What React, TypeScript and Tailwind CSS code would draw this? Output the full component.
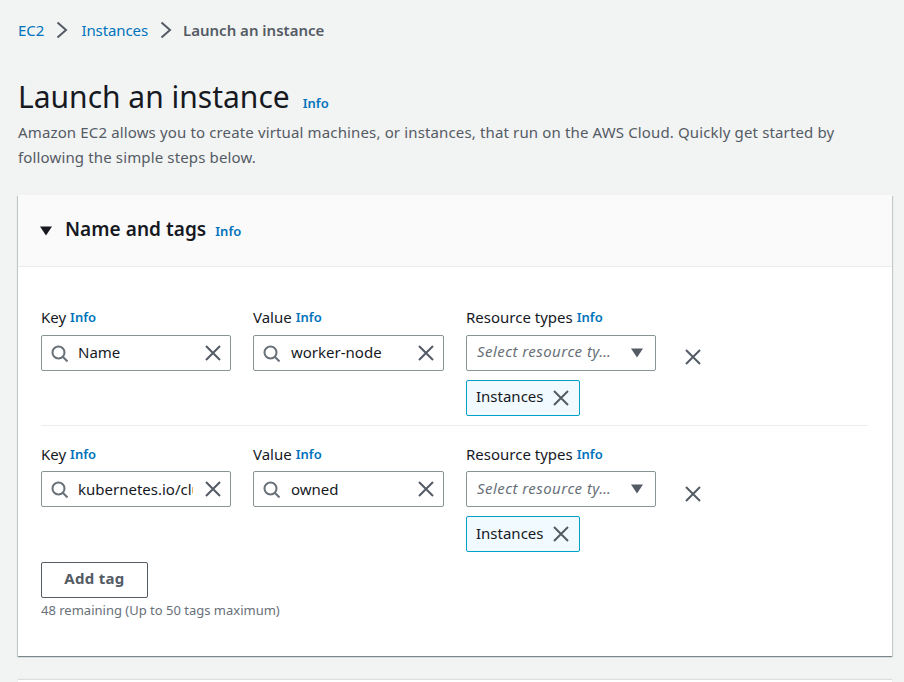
import React from "react";

const Chevron = ({ className = "mr-[9px]" }: { className?: string }) => (
  <svg width="16" height="18" viewBox="0 0 16 18" fill="none" stroke="#545b64" strokeWidth="2" className={`ml-[10px] shrink-0 ${className}`}>
    <path d="M3.5 1.5l8.5 7.5-8.5 7.5" />
  </svg>
);

const Close = ({ size = 16 }: { size?: number }) => (
  <svg width={size} height={size} viewBox="0 0 16 16" fill="none" stroke="#545b64" strokeWidth="2" className="shrink-0">
    <path d="M1 1l14 14M15 1L1 15" />
  </svg>
);

const Search = () => (
  <svg width="17" height="17" viewBox="0 0 17 17" fill="none" stroke="#687078" strokeWidth="2" className="shrink-0">
    <circle cx="7.5" cy="7.5" r="6" />
    <path d="M12 12l4.5 4.5" />
  </svg>
);

const Info = ({ className = "" }: { className?: string }) => (
  <span className={`text-[13px] font-semibold text-[#0073bb] ${className}`}>Info</span>
);

const Label = ({ children, last }: { children: React.ReactNode; last?: boolean }) => (
  <div className={`flex h-[22px] items-center text-[15px] leading-[22px] text-[#16191f] ${last ? "mb-[6px]" : "mb-[7px]"}`}>
    {children}
    <Info className="ml-[4px]" />
  </div>
);

const SearchInput = ({ value, wide, last }: { value: string; wide?: boolean; last?: boolean }) => (
  <div className="flex h-[36px] items-center rounded-[2px] border border-[#879596] bg-white pl-[9px]">
    <Search />
    <span className={`w-[115px] shrink-0 overflow-hidden whitespace-nowrap text-[15px] text-[#16191f] ${wide ? "ml-[11px]" : "ml-[10px]"} ${last ? "" : "pb-[2px]"}`}>{value}</span>
    <span className="ml-[12px]"><Close /></span>
  </div>
);

const TagRow = ({ k, v, last }: { k: string; v: string; last?: boolean }) => (
  <div className={`flex pt-[17px] ${last ? "" : "border-b border-[#eaeded] pb-[9px]"}`}>
    <div className="w-[190px]">
      <Label last={last}>Key</Label>
      <SearchInput value={k} last={last} />
    </div>
    <div className="ml-[22px] w-[191px]">
      <Label last={last}>Value</Label>
      <SearchInput value={v} wide last={last} />
    </div>
    <div className="ml-[22px] w-[190px]">
      <Label last={last}>Resource types</Label>
      <div className="flex h-[36px] items-center justify-between rounded-[2px] border border-[#879596] bg-white pl-[10px] pr-[11px]">
        <span className={`whitespace-nowrap text-[15px] italic tracking-[0.45px] text-[#687078] ${last ? "pb-[1px]" : "pb-[3px]"}`}>Select resource ty…</span>
        <svg width="14" height="10" viewBox="0 0 14 10" className="shrink-0">
          <path d="M1 0.5h12L7 9.5z" fill="#545b64" />
        </svg>
      </div>
      <div className="mt-[9px] flex h-[36px] w-[114px] items-center justify-between rounded-[2px] border border-[#00a1c9] bg-[#f1faff] pl-[9px] pr-[10px]">
        <span className={`text-[15px] text-[#16191f] ${last ? "pb-[1px]" : "pb-[3px]"}`}>Instances</span>
        <Close />
      </div>
    </div>
    <div className="ml-[29px] pt-[43px]">
      <Close />
    </div>
  </div>
);

export default function App() {
  return (
    <div className="h-[682px] w-[904px] overflow-hidden bg-[#f2f3f3] font-['Noto_Sans',sans-serif]">
      <div className="flex h-[60px] items-center pl-[18px] text-[15px]">
        <span className="text-[#0073bb]">EC2</span>
        <Chevron className="mr-[11px]" />
        <span className="tracking-[-0.1px] text-[#0073bb]">Instances</span>
        <Chevron />
        <span className="font-semibold text-[#545b64]">Launch an instance</span>
      </div>
      <div className="mt-[6px] flex h-[48px] items-center pl-[18px] pt-[14px]">
        <h1 className="text-[30px] font-normal leading-[40px] text-[#16191f]">Launch an instance</h1>
        <Info className="ml-[13px] mt-[13px]" />
      </div>
      <p className="mt-[6px] w-[850px] pl-[18px] text-[15px] leading-[25px] tracking-[0.14px] text-[#545b64]">
        Amazon EC2 allows you to create virtual machines, or instances, that run on the AWS Cloud. Quickly get started by following the simple steps below.
      </p>
      <div className="mx-[18px] mt-[25px] h-[461px] w-[874px] bg-white shadow-[0_1px_1px_0_rgba(0,28,36,0.3),1px_1px_1px_0_rgba(0,28,36,0.15),-1px_1px_1px_0_rgba(0,28,36,0.15)]">
        <div className="flex h-[72px] items-center border-b border-[#eaeded] bg-[#fafafa] pl-[22px]">
          <svg width="12" height="10" viewBox="0 0 12 10" className="shrink-0">
            <path d="M0 0.5h12L6 9.5z" fill="#16191f" />
          </svg>
          <span className="ml-[13px] pb-[3px] text-[19px] font-semibold leading-[24px] tracking-[0.05px] text-[#16191f]">Name and tags</span>
          <Info className="ml-[9px] mt-[2px]" />
        </div>
        <div className="pl-[23px] pt-[22px]">
          <div className="w-[827px]">
            <TagRow k="Name" v="worker-node" />
            <TagRow k="kubernetes.io/cluster" v="owned" last />
          </div>
          <button className="mt-[10px] block h-[36px] w-[107px] rounded-[2px] border border-[#545b64] bg-white pb-[3px] text-[15px] font-bold tracking-[0.3px] text-[#545b64]">Add tag</button>
          <div className="mt-[3px] text-[13px] leading-[18px] text-[#687078]">48 remaining (Up to 50 tags maximum)</div>
        </div>
      </div>
      <div className="mx-[18px] mt-[24px] h-[40px] w-[874px] bg-white shadow-[0_-1px_1px_0_rgba(0,28,36,0.1)]" />
    </div>
  );
}
